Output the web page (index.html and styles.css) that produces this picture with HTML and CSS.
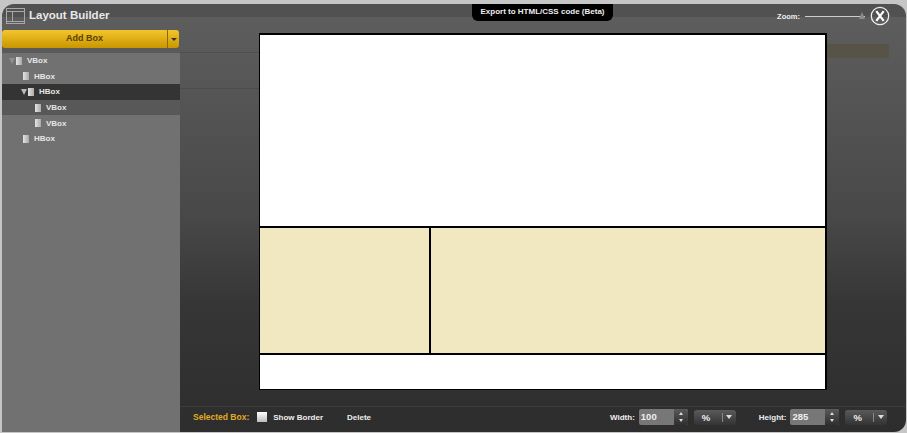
FILE: index.html
```html
<!DOCTYPE html>
<html lang="en">
<head>
    <meta charset="UTF-8">
    <title>Layout Builder</title>
    <link rel="stylesheet" href="styles.css">
</head>
<body>
    <div class="window">
        <!-- Left panel -->
        <div class="sidebar">
            <div class="title">
                <svg class="logo" width="19" height="16" viewBox="0 0 19 16">
                    <rect x="0.5" y="0.5" width="18" height="15" fill="none" stroke="#a8a8a8"/>
                    <path d="M0 3.5H19M0 13.5H19M6.5 3.5V13.5" stroke="#a8a8a8" fill="none"/>
                </svg>
                <span>Layout Builder</span>
            </div>
            <div class="add-box">
                <div class="add-label">Add Box</div>
                <div class="add-arrow"><i class="tri dark"></i></div>
            </div>
            <ul class="tree">
                <li class="lvl0"><i class="tri muted"></i><i class="doc"></i>VBox</li>
                <li class="lvl1"><i class="doc"></i>HBox</li>
                <li class="lvl1b selected"><i class="tri"></i><i class="doc"></i>HBox</li>
                <li class="lvl2 shaded"><i class="doc"></i>VBox</li>
                <li class="lvl2"><i class="doc"></i>VBox</li>
                <li class="lvl1"><i class="doc"></i>HBox</li>
            </ul>
        </div>

        <!-- Main area -->
        <div class="main">
            <div class="export">Export to HTML/CSS code (Beta)</div>
            <div class="zoom">
                <span>Zoom:</span>
                <div class="slider"><i class="thumb"></i></div>
                <svg width="20" height="20" viewBox="0 0 20 20">
                    <circle cx="10" cy="10" r="8.7" fill="none" stroke="#eee" stroke-width="1.3"/>
                    <path d="M6.3 5.2L13.7 14.8M13.7 5.2L6.3 14.8" stroke="#fff" stroke-width="2.2"/>
                </svg>
            </div>
            <div class="canvas">
                <div class="box-top"></div>
                <div class="box-mid">
                    <div class="col-a"></div>
                    <div class="col-b"></div>
                </div>
                <div class="box-bottom"></div>
            </div>
            <div class="toolbar">
                <span class="selected-label">Selected Box:</span>
                <i class="check"></i>
                <span class="show-border">Show Border</span>
                <span class="delete">Delete</span>
                <span class="width-label">Width:</span>
                <div class="num"><span>100</span><div class="step"><i class="up"></i><i class="down"></i></div></div>
                <div class="unit"><span>%</span><div class="unit-arrow"><i class="tri small"></i></div></div>
                <span class="height-label">Height:</span>
                <div class="num"><span>285</span><div class="step"><i class="up"></i><i class="down"></i></div></div>
                <div class="unit"><span>%</span><div class="unit-arrow"><i class="tri small"></i></div></div>
            </div>
        </div>
    </div>
</body>
</html>
```

FILE: styles.css
```css
html, body {
    margin: 0;
    height: 100%;
}
body {
    width: 907px;
    height: 433px;
    overflow: hidden;
    background: #c6c6c6;
    font-family: "Liberation Sans", Arial, sans-serif;
    font-size: 8px;
    font-weight: bold;
    color: #eee;
}
.window {
    display: flex;
    width: 904px;
    height: 428px;
    margin: 4px 0 0 2px;
    border-radius: 12px 12px 12px 0;
    overflow: hidden;
    background:
        linear-gradient(#515151, #515151) 0 0 / 100% 13px no-repeat,
        linear-gradient(#5d5d5d 4%, #484848 50%, #363636 70%, #2d2d2d 100%);
}

/* sidebar */
.sidebar {
    width: 178px;
    flex: none;
    display: flex;
    flex-direction: column;
}
.title {
    box-sizing: border-box;
    height: 26px;
    padding: 0 0 4px 4px;
    display: flex;
    align-items: center;
    gap: 4px;
    font-size: 11.5px;
    color: #e8e8e8;
}
.logo {
    flex: none;
    margin-top: 2px;
}
.add-box {
    display: flex;
    height: 18px;
    margin: 0 1px 5px 0;
    border-radius: 3px;
    overflow: hidden;
    background: linear-gradient(#f3c62c, #c99600);
    color: #5a4200;
    font-size: 9px;
    line-height: 17px;
    text-align: center;
}
.add-label {
    flex: 1;
}
.add-arrow {
    width: 11px;
    border-left: 1px solid #8a6a08;
    display: flex;
    align-items: center;
    justify-content: center;
}
.tree {
    list-style: none;
    margin: 0;
    padding: 0;
    flex: 1;
    background: #717171;
}
.tree li {
    height: 15.6px;
    display: flex;
    align-items: center;
    color: #e6e6e6;
}
.lvl0 { padding-left: 7px; }
.lvl1 { padding-left: 21px; }
.lvl1b { padding-left: 19px; }
.lvl2 { padding-left: 33px; }
.selected { background: #343434; }
.shaded { background: #585858; }
.tri {
    width: 0;
    height: 0;
    border-left: 3px solid transparent;
    border-right: 3px solid transparent;
    border-top: 6px solid #b8b8b8;
    margin-right: 1px;
}
.tri.muted { border-top-color: #8f8f8f; }
.tri.dark {
    border-top: 3px solid #333;
    margin: 0;
}
.tri.small {
    border-top: 4px solid #ddd;
    margin: 0;
}
.doc {
    width: 6px;
    height: 8px;
    background: linear-gradient(90deg, #e4e4e4, #aaa);
    margin-right: 5px;
}

/* main area */
.main {
    flex: 1;
    position: relative;
    display: flex;
    flex-direction: column;
    background:
        linear-gradient(#4e4e4e, #4e4e4e) 0 48px / 79px 1px no-repeat,
        linear-gradient(#4c4c4c, #4c4c4c) 0 84px / 79px 1px no-repeat,
        linear-gradient(#575347, #575347) 647px 40px / 62px 14px no-repeat;
}
.export {
    position: absolute;
    left: 292px;
    top: 0;
    width: 141px;
    height: 17px;
    background: #000;
    border-radius: 0 0 6px 6px;
    text-align: center;
    line-height: 15px;
    color: #eee;
}
.zoom {
    position: absolute;
    right: 16px;
    top: 2px;
    display: flex;
    align-items: center;
    gap: 5px;
}
.zoom span {
    font-size: 7.5px;
}
.slider {
    position: relative;
    width: 60px;
    height: 1px;
    background: #ccc;
}
.thumb {
    position: absolute;
    right: 0;
    top: -4px;
    border-left: 3.5px solid transparent;
    border-right: 3.5px solid transparent;
    border-bottom: 7px solid #8c8c8c;
}
.canvas {
    width: 565px;
    height: 354px;
    margin: 29px 0 0 79px;
    background: #fff;
    border: 1px solid #000;
    border-right-width: 2px;
    border-top-width: 2px;
    display: flex;
    flex-direction: column;
}
.box-top {
    height: 191px;
    border-bottom: 2px solid #000;
}
.box-mid {
    height: 125px;
    display: flex;
    background: #f1e8c1;
    border-bottom: 2px solid #000;
}
.col-a {
    width: 169px;
    border-right: 2px solid #000;
}
.col-b {
    flex: 1;
}
.box-bottom {
    flex: 1;
}

/* bottom toolbar */
.toolbar {
    box-sizing: border-box;
    display: flex;
    align-items: center;
    height: 26px;
    margin-top: 16px;
    padding: 0 0 5px 13px;
    border-top: 1px solid #3c3c3c;
}
.selected-label {
    color: #e0ac24;
    font-size: 8.5px;
    margin-right: 8px;
}
.check {
    width: 10px;
    height: 10px;
    background: linear-gradient(#fff, #bbb);
    margin-right: 6px;
}
.show-border {
    margin-right: 24px;
}
.delete {
    margin-right: 239px;
}
.width-label {
    margin-right: 4px;
}
.height-label {
    margin: 0 4px 0 23px;
}
.num {
    display: flex;
    width: 49px;
    height: 16px;
    margin-right: 6px;
    background: #777;
    border-radius: 2px;
    overflow: hidden;
    font-size: 9.5px;
    line-height: 15px;
}
.num span {
    flex: 1;
    padding-left: 2px;
}
.step {
    width: 14px;
    background: linear-gradient(#5a5a5a, #2e2e2e);
    display: flex;
    flex-direction: column;
    align-items: center;
    justify-content: center;
    gap: 4px;
}
.up, .down {
    width: 0;
    height: 0;
    border-left: 2.5px solid transparent;
    border-right: 2.5px solid transparent;
}
.up { border-bottom: 3px solid #ddd; }
.down { border-top: 3px solid #ddd; }
.unit {
    display: flex;
    width: 42px;
    height: 15px;
    background: linear-gradient(#5a5a5a, #333);
    border-radius: 3px;
    font-size: 9.5px;
    line-height: 15px;
    overflow: hidden;
}
.unit span {
    flex: 1;
    padding-left: 8px;
}
.unit-arrow {
    width: 13px;
    margin: 3px 0;
    border-left: 1px solid #888;
    display: flex;
    align-items: center;
    justify-content: center;
}
```
